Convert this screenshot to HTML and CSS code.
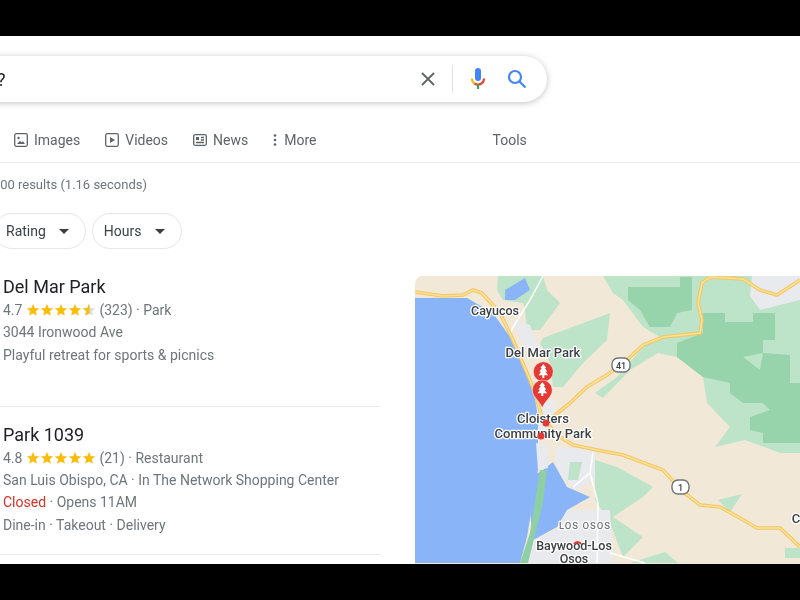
FILE: index.html
```html
<!DOCTYPE html>
<html lang="en">
<head>
<meta charset="UTF-8" />
<title>parks near me? - Search</title>
<link rel="stylesheet" href="styles.css">
</head>
<body>
<svg class="defs" width="0" height="0">
  <defs>
    <polygon id="star" points="6,0.5 7.6,4.3 11.7,4.6 8.6,7.3 9.5,11.3 6,9.2 2.5,11.3 3.4,7.3 0.3,4.6 4.4,4.3" />
    <clipPath id="half"><rect x="56" y="0" width="6.5" height="12" /></clipPath>
    <g id="tree">
      <polygon points="0,-7.500 3,-3.400 1.600,-3.400 4,0.200 2.200,0.200 4.800,3.800 1,3.800 1,6.500 -1,6.500 -1,3.800 -4.800,3.800 -2.200,0.200 -4,0.200 -1.600,-3.400 -3,-3.400" />
    </g>
  </defs>
</svg>

<div class="letterbox"></div>

<main class="serp">
  <div class="searchbar">
    <span class="query">parks near me?</span>
    <svg class="icon-clear" width="16" height="16" viewBox="0 0 16 16"><path d="M2 2 14 14M14 2 2 14" /></svg>
    <span class="sep"></span>
    <svg class="icon-mic" width="16" height="24" viewBox="0 0 16 24">
      <rect x="5" y="1" width="6" height="13" rx="3" fill="#4285f4" />
      <path d="M2 11.5C2 14 3 15.5 4.5 16.500" stroke="#fbbc04" />
      <path d="M4.500 16.500C6.500 17.700 9.500 17.700 11.500 16.500C13 15.500 14 14 14 11.500" stroke="#ea4335" />
      <path d="M8 17.500V22" stroke="#34a853" />
    </svg>
    <svg class="icon-search" width="20" height="20" viewBox="0 0 20 20"><circle cx="8" cy="8" r="6" /><path d="M12.500 12.500 18.500 18.500" /></svg>
  </div>

  <nav class="tabs">
    <a class="tab"><svg width="14" height="14" viewBox="0 0 14 14"><rect x="0.700" y="0.700" width="12.600" height="12.600" rx="1.500" /><circle class="fill" cx="4.500" cy="5" r="1.200" /><path class="fill" d="M3 11 6 7.800 7.500 9.500 9 8.300 11 11Z" /></svg>Images</a>
    <a class="tab"><svg width="14" height="14" viewBox="0 0 14 14"><rect x="0.700" y="0.700" width="12.600" height="12.600" rx="1.500" /><path class="fill" d="M5 4 10 7 5 10Z" /></svg>Videos</a>
    <a class="tab"><svg width="14" height="14" viewBox="0 0 14 14"><rect x="0.700" y="1.700" width="12.600" height="10.600" rx="1.500" /><rect class="fill" x="3" y="4" width="3" height="3" /><path d="M8 4.500H11M8 7H11M3 9.500H11" /></svg>News</a>
    <a class="tab tab-more"><svg width="4" height="14" viewBox="0 0 4 14"><circle class="fill" cx="2" cy="2.500" r="1.300" /><circle class="fill" cx="2" cy="7" r="1.300" /><circle class="fill" cx="2" cy="11.500" r="1.300" /></svg>More</a>
    <a class="tab tab-tools">Tools</a>
  </nav>

  <div class="stats">About 300 results (1.16 seconds)</div>

  <div class="chips">
    <button class="chip">Rating<i class="caret"></i></button>
    <button class="chip">Hours<i class="caret"></i></button>
  </div>

  <section class="local">
    <div class="listing">
      <article class="place">
        <h3>Del Mar Park</h3>
        <p>4.7 <span class="stars"><svg width="68" height="12" viewBox="0 0 68 12"><use href="#star" /><use href="#star" x="14" /><use href="#star" x="28" /><use href="#star" x="42" /><use href="#star" x="56" class="star-off" /><g clip-path="url(#half)"><use href="#star" x="56" /></g></svg></span> (323) · Park</p>
        <p>3044 Ironwood Ave</p>
        <p>Playful retreat for sports &amp; picnics</p>
      </article>
      <article class="place">
        <h3>Park 1039</h3>
        <p>4.8 <span class="stars"><svg width="68" height="12" viewBox="0 0 68 12"><use href="#star" /><use href="#star" x="14" /><use href="#star" x="28" /><use href="#star" x="42" /><use href="#star" x="56" /></svg></span> (21) · Restaurant</p>
        <p>San Luis Obispo, CA · In The Network Shopping Center</p>
        <p><span class="closed">Closed</span> · Opens 11AM</p>
        <p>Dine-in · Takeout · Delivery</p>
      </article>
    </div>

    <div class="map">
      <svg width="385" height="288" viewBox="415 276 385 288">
        <rect class="land" x="415" y="276" width="385" height="288" />
        <!-- parks -->
        <polygon class="green" points="603,276 800,276 800,453 780,453 745,440 715,447 730,427 707,403 703,377 677,357 658,353 630,370 603,398 595,393 617,377 643,347 660,337 643,327 623,300 613,293" />
        <polygon class="green" points="498,276 543,276 547,290 560,303 540,330 527,330 525,310 523,303 503,300 497,290" />
        <polygon class="green" points="543,338 610,313 607,340 583,363 563,387 553,387 550,363 540,343" />
        <polygon class="green" points="595,460 617,467 653,487 643,497 613,517 643,537 623,557 610,523 595,500" />
        <polygon class="green" points="415,298 440,298 436,302 415,303" />
        <polygon class="green" points="718,500 742,494 730,512" />
        <polygon class="green" points="630,563 665,552 678,563" />
        <polygon class="green" points="785,548 800,548 800,558 785,558" />
        <polygon class="green-dark" points="628,287 680,287 680,277 692,277 692,310 677,313 670,327 650,327 640,310 628,300" />
        <polygon class="green-dark" points="677,343 703,333 703,313 725,313 725,322 753,322 753,313 775,313 775,340 763,340 763,353 743,357 760,370 763,353 790,355 790,383 800,383 800,443 763,443 763,433 750,430 750,417 770,410 763,403 743,403 730,393 730,383 703,377 677,357" />
        <!-- towns -->
        <polygon class="urban" points="513,320 530,325 540,350 525,350" />
        <polygon class="urban" points="557,447 595,450 595,480 575,490 555,470" />
        <polygon class="urban" points="567,510 610,510 613,563 528,563 530,540 557,530" />
        <polygon class="urban" points="538,405 556,400 553,430 540,440" />
        <polygon class="urban" points="752,276 800,276 800,300 760,310 750,296" />
        <polygon class="green" points="570,462 582,462 578,480 568,480" />
        <!-- water -->
        <polygon class="water" points="415,298 467,298 493,313 510,337 523,367 533,387 538,417 538,440 538,470 527,537 520,563 415,563" />
        <polygon class="water" points="543,470 553,462 567,487 590,497 567,510 557,527 533,540 527,480" />
        <polygon class="water" points="505,290 525,278 530,290 515,300 505,300" />
        <polygon class="spit" points="540,470 547,470 543,503 528,563 520,563 530,533" />
        <polygon class="urban" points="536,443 548,445 548,468 538,470" />
        <!-- local roads -->
        <path class="road-local" d="M543 276 530 300 513 327 510 335M593 452 590 473 573 487M590 473 598 503 597 563M610 553 645 563" />
        <!-- highways -->
        <path class="road" d="M415 292 443 296 463 295 473 290 482 293 500 313 513 340 527 373 535 393 542 417 557 435 573 445 597 450 623 455 663 470 683 492 700 505 720 507 740 518 757 528 780 528 800 547" />
        <path class="road" d="M553 417 570 403 587 387 607 375 627 360 643 345 663 337 700 333 702 320 698 303 702 283 710 277 743 279 760 290 777 295 800 280" />
        <path class="road-in" d="M415 292 443 296 463 295 473 290 482 293 500 313 513 340 527 373 535 393 542 417 557 435 573 445 597 450 623 455 663 470 683 492 700 505 720 507 740 518 757 528 780 528 800 547" />
        <path class="road-in" d="M553 417 570 403 587 387 607 375 627 360 643 345 663 337 700 333 702 320 698 303 702 283 710 277 743 279 760 290 777 295 800 280" />
        <!-- shields -->
        <rect class="shield" x="612" y="358" width="18" height="14" rx="6" />
        <text class="shield-text" x="621" y="368.500">41</text>
        <rect class="shield" x="672" y="480" width="17" height="14" rx="6" />
        <text class="shield-text" x="680.500" y="490.500">1</text>
        <!-- labels -->
        <text class="label label-sm" x="495" y="314.500">Cayucos</text>
        <text class="label" x="543" y="356.500">Del Mar Park</text>
        <text class="label" x="543" y="423">Cloisters</text>
        <text class="label" x="543" y="438">Community Park</text>
        <text class="label-town" x="585" y="528.500">LOS OSOS</text>
        <text class="label label-sm" x="574" y="550">Baywood-Los</text>
        <text class="label label-sm" x="574" y="562.500">Osos</text>
        <text class="label" x="796" y="522.500">C</text>
        <!-- pins -->
        <circle class="dot" cx="546" cy="423" r="3.500" />
        <circle class="dot" cx="541" cy="436" r="3.500" />
        <path class="dot-arc" d="M574 544A4 4 0 0 1 581 544" />
        <circle class="pin" cx="543.300" cy="371.700" r="10" />
        <use class="pin-tree" href="#tree" x="543.300" y="371.500" />
        <path class="pin" d="M542.300 408C540 401 532.300 397 532.300 390A10 10 0 0 1 552.300 390C552.300 397 544.600 401 542.300 408Z" />
        <use class="pin-tree" href="#tree" x="542.300" y="389.500" />
      </svg>
    </div>
  </section>
</main>

<div class="letterbox"></div>
</body>
</html>
```

FILE: styles.css
```css
* { box-sizing: border-box; }
html, body {
  margin: 0; padding: 0;
  height: 100%;
  overflow: hidden;
  background: #000;
  font-family: Roboto, 'Liberation Sans', sans-serif;
}
body { display: flex; flex-direction: column; }
.defs { position: absolute; }
.letterbox { height: 36px; flex: none; background: #000; }

.serp {
  flex: 1;
  min-height: 0;
  overflow: hidden;
  background: #fff;
  display: flex;
  flex-direction: column;
  filter: blur(0.35px);
}

/* Search box, runs off the left edge */
.searchbar {
  flex: none;
  width: 687px;
  height: 46px;
  margin: 20px 0 0 -140px;
  padding-right: 20px;
  display: flex;
  align-items: center;
  background: #fff;
  border-radius: 23px;
  box-shadow: 0 1px 6px rgba(32,33,36,0.28);
}
.query { flex: 1; padding-left: 23px; font-size: 18px; color: #202124; }
.icon-clear { margin-right: 16px; }
.icon-clear path { fill: none; stroke: #5f6368; stroke-width: 1.8; }
.sep { width: 1px; height: 28px; background: #dfe1e5; margin-right: 17px; }
.icon-mic { margin-right: 21px; }
.icon-mic path { fill: none; stroke-width: 2.2; }
.icon-search { margin-right: 0; }
.icon-search circle, .icon-search path { fill: none; stroke: #4285f4; stroke-width: 2.2; }

/* Tabs */
.tabs {
  flex: none;
  height: 61px;
  padding: 16px 0 0 14px;
  display: flex;
  align-items: center;
  gap: 25px;
  border-bottom: 1px solid #ebebeb;
  font-size: 14px;
  color: #5f6368;
}
.tab { display: flex; align-items: center; gap: 6px; }
.tab svg * { fill: none; stroke: #5f6368; stroke-width: 1.300; }
.tab svg .fill { fill: #5f6368; stroke: none; }
.tab-more { gap: 7px; }
.tab-tools { margin-left: 151px; }

.stats {
  flex: none;
  margin: 12px 0 0 -45px;
  height: 20px;
  line-height: 20px;
  font-size: 13px;
  color: #70757a;
  white-space: nowrap;
}

.chips { flex: none; display: flex; gap: 6px; margin: 18px 0 0 -6px; }
.chip {
  height: 36px;
  padding: 0 16px 0 11px;
  display: flex;
  align-items: center;
  background: #fff;
  border: 1.500px solid #e4e6e9;
  border-radius: 18px;
  font: 14px Roboto, sans-serif;
  color: #3c4043;
}
.caret {
  width: 0; height: 0;
  margin-left: 13px;
  border: 5px solid transparent;
  border-top-color: #3c4043;
  border-bottom: 0;
}

/* Listing and map */
.local { flex: 1; min-height: 0; display: flex; gap: 35px; margin-top: 27px; }
.listing { flex: none; width: 380px; }
.place { padding: 0 0 40px 3px; border-bottom: 1px solid #ebebeb; }
.place h3 { margin: 0 0 1px; font-size: 18px; font-weight: 400; line-height: 22px; color: #202124; }
.place p { margin: 0; font-size: 14px; line-height: 22.300px; color: #70757a; white-space: nowrap; }
.place + .place { padding: 17px 0 18px 3px; }
.stars { display: inline-block; vertical-align: -1px; margin: 0 1px; }
.stars svg { display: block; fill: #fbbc04; stroke: #fbbc04; stroke-width: 0.400; }
.stars .star-off { fill: #dadce0; stroke: #dadce0; }
.closed { color: #d93025; }

.map { flex: 1; overflow: hidden; border-radius: 8px 0 0 0; }
.map svg { display: block; }
.land { fill: #f1e8d7; }
.green { fill: #bde3c8; }
.green-dark { fill: #97d3ab; }
.urban { fill: #e8eaed; }
.water { fill: #8ab4f8; }
.spit { fill: #8fcfa5; }
.road-local { fill: none; stroke: #fff; stroke-width: 1.500; }
.road { fill: none; stroke: #f3c566; stroke-width: 3.600; }
.road-in { fill: none; stroke: #fde293; stroke-width: 1.600; }
.shield { fill: #fff; stroke: #70757a; stroke-width: 1.400; }
.shield-text { font-size: 9px; font-weight: 500; fill: #3c4043; text-anchor: middle; }
.label, .label-town {
  text-anchor: middle;
  paint-order: stroke;
  stroke: #fff;
  stroke-width: 2.500px;
  stroke-linejoin: round;
}
.label { font-size: 13px; font-weight: 500; fill: #3c4043; }
.label-sm { font-size: 12.500px; }
.label-town { font-size: 9.500px; font-weight: 500; letter-spacing: 1px; fill: #70757a; }
.pin, .dot { fill: #e53935; }
.pin { stroke: #fff; stroke-width: 0.500; }
.dot-arc { fill: none; stroke: #e53935; stroke-width: 2; }
.pin-tree { fill: #fff; }
```
